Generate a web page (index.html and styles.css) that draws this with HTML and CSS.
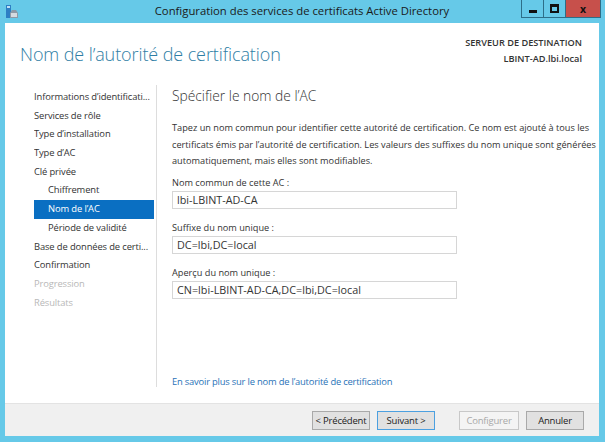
FILE: index.html
```html
<!DOCTYPE html>
<html lang="fr">
<head>
  <meta charset="UTF-8" />
  <title>Configuration des services de certificats Active Directory</title>
  <link rel="stylesheet" href="styles.css">
</head>
<body>

<div class="window">
  <!-- Title bar -->
  <div class="titlebar">
    <svg class="app-icon" width="14" height="14" viewBox="0 0 14 14">
      <rect x="1" y="0" width="5" height="13" fill="#2d7fc4"/>
      <rect x="2" y="1" width="3" height="2" fill="#bfe0f5"/>
      <path d="M5 8 L7 5 L11 5 L13 8 L13 13 L5 13 Z" fill="#8c9aa6"/>
      <rect x="6" y="8" width="6" height="4" fill="#d5dbe0"/>
    </svg>
    <div class="title">Configuration des services de certificats Active Directory</div>
    <div class="win-buttons">
      <div class="wbtn min"><span class="min-bar"></span></div>
      <div class="wbtn max"><span class="max-box"></span></div>
      <div class="wbtn close">x</div>
    </div>
  </div>

  <div class="client">
    <header class="page-header">
      <h1>Nom de l’autorité de certification</h1>
      <div class="dest">
        <div class="dest-label">SERVEUR DE DESTINATION</div>
        <div class="dest-name">LBINT-AD.lbi.local</div>
      </div>
    </header>

    <div class="body">
      <ul class="steps">
        <li>Informations d’identificati...</li>
        <li>Services de rôle</li>
        <li>Type d’installation</li>
        <li>Type d’AC</li>
        <li>Clé privée</li>
        <li class="sub">Chiffrement</li>
        <li class="sub active">Nom de l’AC</li>
        <li class="sub">Période de validité</li>
        <li>Base de données de certi...</li>
        <li>Confirmation</li>
        <li class="off">Progression</li>
        <li class="off">Résultats</li>
      </ul>

      <main class="content">
        <h2>Spécifier le nom de l’AC</h2>
        <p class="intro">Tapez un nom commun pour identifier cette autorité de certification. Ce nom est ajouté à tous les<br>
          certificats émis par l’autorité de certification. Les valeurs des suffixes du nom unique sont générées<br>
          automatiquement, mais elles sont modifiables.</p>

        <label class="field-label">Nom commun de cette AC :</label>
        <div class="field">lbi-LBINT-AD-CA</div>

        <label class="field-label">Suffixe du nom unique :</label>
        <div class="field">DC=lbi,DC=local</div>

        <label class="field-label">Aperçu du nom unique :</label>
        <div class="field">CN=lbi-LBINT-AD-CA,DC=lbi,DC=local</div>

        <a class="more" href="#">En savoir plus sur le nom de l’autorité de certification</a>
      </main>
    </div>

    <footer class="buttons">
      <button>&lt; Précédent</button>
      <button class="default">Suivant &gt;</button>
      <button class="disabled spaced">Configurer</button>
      <button>Annuler</button>
    </footer>
  </div>
</div>

</body>
</html>
```

FILE: styles.css
```css
body { margin: 0; padding: 0; font-family: "Open Sans", "Noto Sans", sans-serif; color: #1e1e1e; }
.window { width: 605px; height: 442px; background: #66c9e8; display: flex; flex-direction: column; }

.titlebar { height: 23px; display: flex; align-items: flex-start; }
.app-icon { margin: 5px 0 0 5px; width: 14px; }
.title { flex: 1; text-align: center; font-size: 11.3px; line-height: 22px; color: #1a1a1a; padding-left: 64px; white-space: nowrap; }
.win-buttons { display: flex; margin-right: 4px; }
.wbtn { height: 18px; display: flex; align-items: center; justify-content: center; box-sizing: border-box; }
.wbtn.min, .wbtn.max { width: 23px; border: 1px solid #2d6e88; border-top: none; }
.wbtn.max { width: 22px; border-left: none; }
.wbtn.close { width: 35px; background: #c7504b; color: #111; font-weight: bold; font-size: 10.5px; border: 1px solid #2d6e88; border-top: none; border-left: none; }
.min-bar { width: 8px; height: 3px; background: #111; margin-top: 5px; }
.max-box { width: 5px; height: 4px; border: 2px solid #111; border-top-width: 3px; }

.client { height: 413px; margin: 0 6px 0 5px; background: #fff; display: flex; flex-direction: column; }

.page-header { height: 57px; flex: none; display: flex; justify-content: space-between; padding: 0 17px 0 15px; }
.page-header h1 { margin: 19px 0 0; font-size: 18px; font-weight: 300; color: #2f7ea5; letter-spacing: -0.1px; white-space: nowrap; }
.dest { text-align: right; margin-top: 12px; font-size: 9.2px; line-height: 16px; font-weight: 600; color: #333; }

.body { height: 323px; flex: none; display: flex; overflow: hidden; }
.steps { flex: none; list-style: none; margin: 5px 0 0; padding: 3px 2px 0 29px; width: 120px; height: 299px; border-right: 1px solid #ddd; font-size: 9.4px; letter-spacing: -0.12px; color: #333; }
.steps li { height: 18.7px; line-height: 18.7px; white-space: nowrap; overflow: hidden; }
.steps li.sub { padding-left: 14px; }
.steps li.active { background: #0a6fc2; color: #fff; }
.steps li.off { color: #b8b8b8; }

.content { flex: 1; min-width: 0; padding: 4px 4px 0 15px; font-size: 9.2px; color: #333; }
.content h2 { margin: 0 0 12px; font-size: 13.8px; font-weight: 300; line-height: 24px; color: #333; white-space: nowrap; }
.intro { margin: 0 0 5px; line-height: 16.5px; white-space: nowrap; }
.field-label { display: block; line-height: 15px; margin-bottom: 1px; }
.field { width: 285px; height: 18px; box-sizing: border-box; border: 1px solid #d6d6d6; padding: 0 4px; line-height: 16px; font-size: 10.8px; margin-bottom: 11px; }
.more { display: block; margin-top: 75px; line-height: 15px; color: #2a73b8; text-decoration: none; font-size: 9.4px; letter-spacing: -0.2px; }

.buttons { height: 33px; flex: none; background: #f0f0f0; border-top: 1px solid #e3e3e3; display: flex; justify-content: flex-end; align-items: center; gap: 7px; padding: 0 15px 0 0; box-sizing: border-box; }
.buttons button { width: 58px; height: 19px; padding: 0; font-family: inherit; font-size: 9.5px; letter-spacing: -0.2px; white-space: nowrap; background: #e1e1e1; border: 1px solid #a9a9a9; color: #222; }
.buttons button.default { border-color: #4ca0e0; }
.buttons button.disabled { width: 60px; background: #f4f4f4; border-color: #c8c8c8; color: #a8a8a8; }
.buttons button.spaced { margin-left: 17px; }
```
